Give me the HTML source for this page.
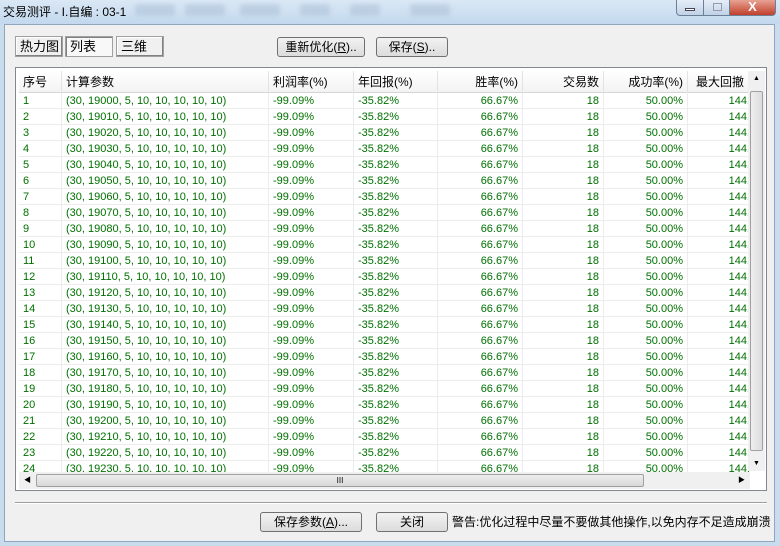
<!DOCTYPE html>
<html><head><meta charset="utf-8"><style>
*{margin:0;padding:0;box-sizing:border-box}
body{width:780px;height:546px;overflow:hidden;background:#c9dcee;font-family:"Liberation Sans","Noto Sans CJK SC",sans-serif;font-size:12px;position:relative}
.title{position:absolute;left:0;top:0;width:780px;height:24px;background:linear-gradient(#dbe8f5,#c3d8ee);}
.title span{position:absolute;left:3px;top:3px;font-size:12px;color:#000}
.blur{position:absolute;top:4px;height:12px;background:#a9bdd3;opacity:.5;border-radius:3px;filter:blur(2px)}
.panel{position:absolute;left:4px;top:24px;width:771px;height:518px;background:#f0f0f0;border:1px solid #8ea6c0}
.ctl{position:absolute;top:0;height:16px;border:1px solid #6d7f96;border-top:none}
.btn{position:absolute;height:20px;border:1px solid #707070;border-radius:3px;background:linear-gradient(#f2f2f2,#dcdcdc);font-size:12px;text-align:center;line-height:18px}
.tab{position:absolute;height:21px;border:1px solid #a0a0a0;background:#f0f0f0;line-height:19px;padding-left:4px;font-size:13px;box-shadow:inset -1px -1px #808080,inset 1px 1px #fff}
.tbl{position:absolute;left:15px;top:67px;width:752px;height:424px;border:1px solid #828790;background:#fff;overflow:hidden}
.hdr{position:absolute;left:3px;top:3px;height:22px;width:745px;background:linear-gradient(#fff,#f3f3f3);border-bottom:1px solid #d5d5d5}
.h{position:absolute;top:0;height:22px;line-height:22px;border-right:1px solid #e3e3e3;font-size:12px;color:#000;padding:0 4px;white-space:nowrap;overflow:hidden}
.row{position:absolute;left:3px;height:16px;width:731px;border-bottom:1px solid #ececec}
.c{position:absolute;top:0;height:16px;line-height:16px;font-family:"Liberation Sans","Noto Sans CJK SC",sans-serif;font-size:11px;color:#007000;white-space:nowrap;border-right:1px solid #ececec;padding:0 4px;overflow:hidden}
.r{text-align:right}
</style></head><body>
<div class="title"><span>交易测评 - I.自编 : 03-1</span>
<div class="blur" style="left:135px;width:40px"></div><div class="blur" style="left:185px;width:40px"></div><div class="blur" style="left:240px;width:40px"></div><div class="blur" style="left:300px;width:30px"></div><div class="blur" style="left:350px;width:30px"></div><div class="blur" style="left:410px;width:40px"></div>
</div>
<div class="ctl" style="left:676px;width:28px;background:linear-gradient(#e5eef8,#c0d2e6);border-radius:0 0 0 4px"><div style="position:absolute;left:8px;top:8px;width:10px;height:3px;background:#fff;border:1px solid #445"></div></div>
<div class="ctl" style="left:703px;width:27px;background:linear-gradient(#e5eef8,#c0d2e6)"><div style="position:absolute;left:9px;top:3px;width:9px;height:8px;border:1px solid #99a;"></div></div>
<div class="ctl" style="left:729px;width:47px;background:linear-gradient(#e8a293,#c0402c);border-radius:0 0 4px 0;color:#fff;font-weight:bold;text-align:center;line-height:14px;font-size:13px">X</div>
<div class="panel"></div>
<div class="tab" style="left:15px;top:36px;width:48px">热力图</div>
<div class="tab" style="left:65px;top:36px;width:48px;background:#f8f8f8;box-shadow:inset 1px 1px #808080">列表</div>
<div class="tab" style="left:116px;top:36px;width:48px">三维</div>
<div class="btn" style="left:277px;top:37px;width:88px">重新优化(<u>R</u>)..</div>
<div class="btn" style="left:376px;top:37px;width:72px">保存(<u>S</u>)..</div>
<div class="tbl">
<div class="hdr">
<div class="h" style="left:0;width:43px">序号</div>
<div class="h" style="left:43px;width:207px">计算参数</div>
<div class="h" style="left:250px;width:85px">利润率(%)</div>
<div class="h" style="left:335px;width:84px">年回报(%)</div>
<div class="h r" style="left:419px;width:85px">胜率(%)</div>
<div class="h r" style="left:504px;width:81px">交易数</div>
<div class="h r" style="left:585px;width:84px">成功率(%)</div>
<div class="h" style="left:669px;width:80px;border:none;padding-left:8px">最大回撤</div>
</div>
<div id="rows"></div>
<div style="position:absolute;right:1px;top:3px;width:17px;height:400px;background:#f0f0f0"><div style="position:absolute;left:2px;top:20px;width:13px;height:360px;background:linear-gradient(90deg,#eee,#dcdcdc);border:1px solid #a0a0a0;border-radius:2px"></div><div style="position:absolute;top:4px;left:5px;font-size:7px">▲</div><div style="position:absolute;bottom:4px;left:5px;font-size:7px">▼</div></div>
<div style="position:absolute;left:3px;top:404px;width:731px;height:17px;background:#f0f0f0"><div style="position:absolute;left:17px;top:2px;width:608px;height:13px;background:linear-gradient(#eee,#d8d8d8);border:1px solid #a0a0a0;border-radius:2px;text-align:center;font-size:8px;line-height:11px">III</div><div style="position:absolute;left:5px;top:3px;font-size:7px">◀</div><div style="position:absolute;right:5px;top:3px;font-size:7px">▶</div></div>
</div>
<div style="position:absolute;left:15px;top:502px;width:752px;height:2px;border-top:1px solid #a0a0a0;border-bottom:1px solid #fff"></div>
<div class="btn" style="left:260px;top:512px;width:102px">保存参数(<u>A</u>)...</div>
<div class="btn" style="left:376px;top:512px;width:72px">关闭</div>
<div style="position:absolute;left:452px;top:513px;font-size:12px;white-space:nowrap">警告:优化过程中尽量不要做其他操作,以免内存不足造成崩溃</div>
<script>
var h='';for(var i=0;i<24;i++){var y=25+i*16;var p=19000+i*10;
h+='<div class="row" style="top:'+y+'px"><div class="c" style="left:0;width:43px">'+(i+1)+'</div><div class="c" style="left:43px;width:207px">(30, '+p+', 5, 10, 10, 10, 10, 10)</div><div class="c" style="left:250px;width:85px">-99.09%</div><div class="c" style="left:335px;width:84px">-35.82%</div><div class="c r" style="left:419px;width:85px">66.67%</div><div class="c r" style="left:504px;width:81px">18</div><div class="c r" style="left:585px;width:84px">50.00%</div><div class="c" style="left:669px;width:62px;border:none;text-align:right;padding-right:0;overflow:visible">144.</div></div>';}
document.getElementById('rows').innerHTML=h;
</script>
</body></html>
